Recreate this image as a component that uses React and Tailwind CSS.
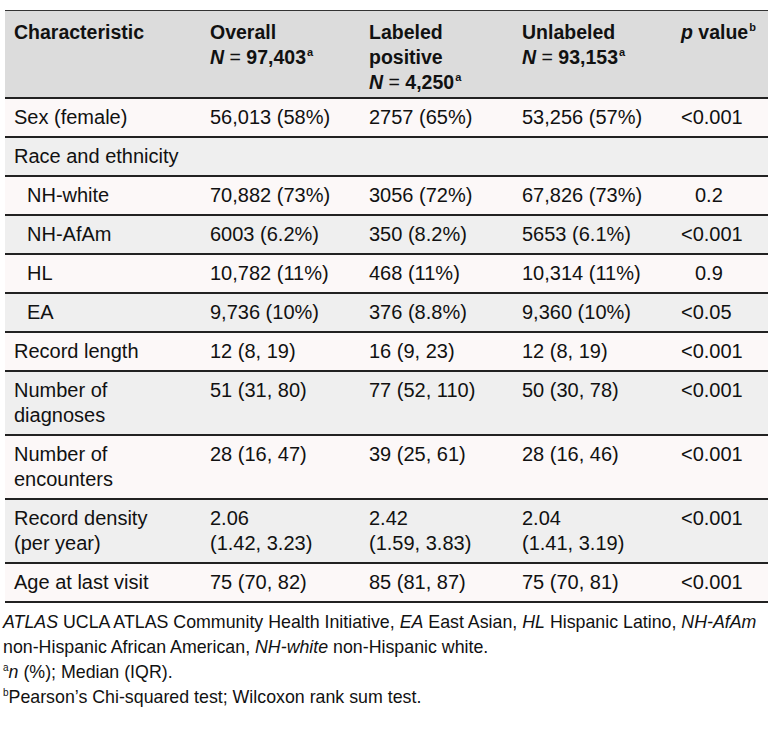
import React from 'react';

const rows = [
  { label: 'Sex (female)', cells: ['56,013 (58%)', '2757 (65%)', '53,256 (57%)'], p: '<0.001' },
  { label: 'Race and ethnicity', cells: ['', '', ''], p: '' },
  { label: 'NH-white', indent: true, cells: ['70,882 (73%)', '3056 (72%)', '67,826 (73%)'], p: '0.2', pad: true },
  { label: 'NH-AfAm', indent: true, cells: ['6003 (6.2%)', '350 (8.2%)', '5653 (6.1%)'], p: '<0.001' },
  { label: 'HL', indent: true, cells: ['10,782 (11%)', '468 (11%)', '10,314 (11%)'], p: '0.9', pad: true },
  { label: 'EA', indent: true, cells: ['9,736 (10%)', '376 (8.8%)', '9,360 (10%)'], p: '<0.05' },
  { label: 'Record length', cells: ['12 (8, 19)', '16 (9, 23)', '12 (8, 19)'], p: '<0.001' },
  { label: ['Number of', 'diagnoses'], cells: ['51 (31, 80)', '77 (52, 110)', '50 (30, 78)'], p: '<0.001' },
  { label: ['Number of', 'encounters'], cells: ['28 (16, 47)', '39 (25, 61)', '28 (16, 46)'], p: '<0.001' },
  { label: ['Record density', '(per year)'], cells: [['2.06', '(1.42, 3.23)'], ['2.42', '(1.59, 3.83)'], ['2.04', '(1.41, 3.19)']], p: '<0.001' },
  { label: 'Age at last visit', cells: ['75 (70, 82)', '85 (81, 87)', '75 (70, 81)'], p: '<0.001' },
];

const Lines = ({ value }) =>
  Array.isArray(value) ? value.map((v, i) => <div key={i}>{v}</div>) : <div>{value}</div>;

const Sup = ({ children }) => (
  <sup className="text-[11px] font-bold relative -top-[8px] ml-[1px]">{children}</sup>
);

const NCount = ({ n }) => (
  <div>
    <span className="italic">N</span>
    <span className="font-normal"> = </span>
    {n}
    <Sup>a</Sup>
  </div>
);

export default function App() {
  return (
    <div className="bg-white w-[784px] h-[730px] text-[#111] font-['Liberation_Sans',Arial,sans-serif]">
      <div className="pt-[10px] pl-[5px]">
        <div className="grid grid-cols-[196px_157px_155px_161px_94px] w-[763px] border-t border-[#333]">
          {/* header */}
          <div className="bg-[#dcdcdc] border-b-2 border-[#222] px-[9px] pt-[9px] pb-[2px] leading-[25px] text-[19.5px] font-bold">
            Characteristic
          </div>
          <div className="bg-[#dcdcdc] border-b-2 border-[#222] px-[9px] pt-[9px] pb-[2px] leading-[25px] text-[19.5px] font-bold">
            <div>Overall</div>
            <NCount n="97,403" />
          </div>
          <div className="bg-[#dcdcdc] border-b-2 border-[#222] px-[11px] pt-[9px] pb-[2px] leading-[25px] text-[19.5px] font-bold">
            <div>Labeled</div>
            <div>positive</div>
            <NCount n="4,250" />
          </div>
          <div className="bg-[#dcdcdc] border-b-2 border-[#222] px-[9px] pt-[9px] pb-[2px] leading-[25px] text-[19.5px] font-bold">
            <div>Unlabeled</div>
            <NCount n="93,153" />
          </div>
          <div className="bg-[#dcdcdc] border-b-2 border-[#222] px-[7px] pt-[9px] pb-[2px] leading-[25px] text-[19.5px] font-bold">
            <span className="italic">p</span> value<Sup>b</Sup>
          </div>

          {rows.map((row, i) => {
            const bg = i % 2 === 0 ? 'bg-[#fcf8f8]' : 'bg-[#efefef]';
            const cell = `${bg} border-b-2 border-[#222] py-[6px] leading-[25px] text-[20px]`;
            return (
              <React.Fragment key={i}>
                <div className={`${cell} ${row.indent ? 'pl-[22px]' : 'pl-[9px]'} pr-[4px]`}>
                  <Lines value={row.label} />
                </div>
                <div className={`${cell} px-[9px]`}>
                  <Lines value={row.cells[0]} />
                </div>
                <div className={`${cell} px-[11px]`}>
                  <Lines value={row.cells[1]} />
                </div>
                <div className={`${cell} px-[9px]`}>
                  <Lines value={row.cells[2]} />
                </div>
                <div className={`${cell} ${row.pad ? 'pl-[21px]' : 'pl-[7px]'}`}>
                  <Lines value={row.p} />
                </div>
              </React.Fragment>
            );
          })}
        </div>
      </div>

      <div className="pl-[3px] pt-[7px] text-[17.8px] leading-[25px]">
        <div className="whitespace-nowrap">
          <span className="italic">ATLAS</span> UCLA ATLAS Community Health Initiative, <span className="italic">EA</span> East Asian,{' '}
          <span className="italic">HL</span> Hispanic Latino, <span className="italic">NH-AfAm</span>
        </div>
        <div>
          non-Hispanic African American, <span className="italic">NH-white</span> non-Hispanic white.
        </div>
        <div>
          <sup className="text-[10px] relative -top-[7px]">a</sup>
          <span className="italic">n</span> (%); Median (IQR).
        </div>
        <div>
          <sup className="text-[10px] relative -top-[7px]">b</sup>
          Pearson’s Chi-squared test; Wilcoxon rank sum test.
        </div>
      </div>
    </div>
  );
}
